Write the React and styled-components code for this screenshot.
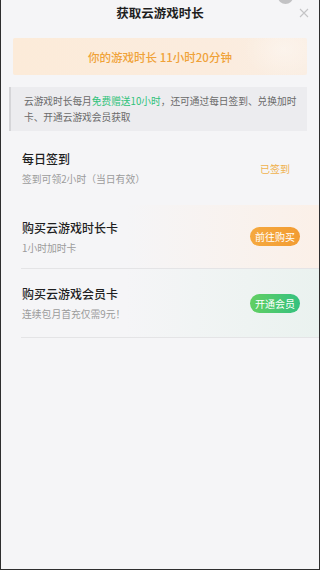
import React from 'react'
import styled, { createGlobalStyle } from 'styled-components'

const GlobalStyle = createGlobalStyle`
  html, body {
    margin: 0;
    padding: 0;
    background: #f5f5f7;
  }
  * { box-sizing: border-box; }
`

const Frame = styled.div`
  position: relative;
  width: 320px;
  height: 570px;
  background: #f5f5f7;
  border-left: 1px solid #2e2e2e;
  border-right: 1px solid #2e2e2e;
  border-bottom: 1px solid #2e2e2e;
  font-family: "Noto Sans CJK SC", "Noto Sans", sans-serif;
  overflow: hidden;
`

const Header = styled.div`
  height: 26px;
  line-height: 26px;
  text-align: center;
  font-size: 12.5px;
  font-weight: 700;
  color: #1e1e1e;
`

const Notch = styled.div`
  position: absolute;
  top: -10px;
  left: 277px;
  width: 15px;
  height: 14px;
  border-radius: 50%;
  background: #c2c2c4;
`

const Close = styled.svg`
  position: absolute;
  top: 8px;
  left: 298px;
  width: 10px;
  height: 10px;
`

const Banner = styled.div`
  margin: 12px 12px 0 12px;
  height: 37px;
  border-radius: 2px;
  display: flex;
  align-items: center;
  justify-content: center;
  background:
    radial-gradient(ellipse 40px 30px at 92% 30%, rgba(255, 255, 255, 0.35), transparent),
    linear-gradient(90deg, #fcebd9 0%, #fbecde 70%, #faeee3 100%);
  color: #f0a238;
  font-size: 11.5px;
  font-weight: 500;
`

const Notice = styled.div`
  margin: 12px 12px 0 8px;
  padding: 6px 4px 6px 13px;
  border-left: 2px solid #d5d5d8;
  background: #ececef;
  color: #6a6a6a;
  font-size: 9.7px;
  line-height: 16px;
`

const Green = styled.span`
  color: #2fc27a;
`

const Row = styled.div`
  height: ${p => p.$h}px;
  margin-left: 20px;
  padding: 0 19px 0 1px;
  display: flex;
  align-items: center;
  justify-content: space-between;
  border-bottom: ${p => (p.$divider ? '1px solid #e4e4e6' : 'none')};
  background: ${p => p.$tint
    ? `linear-gradient(90deg, rgba(245,245,247,0) 35%, ${p.$tint} 100%)`
    : 'transparent'};
`

const Info = styled.div`
  display: flex;
  flex-direction: column;
`

const Title = styled.div`
  font-size: 12px;
  line-height: 18px;
  font-weight: 500;
  color: #1f1f1f;
`

const Sub = styled.div`
  margin-top: 4px;
  font-size: 9.8px;
  line-height: 14px;
  color: #9b9b9b;
`

const Done = styled.div`
  width: 50px;
  text-align: center;
  font-size: 10px;
  color: #f0b24e;
`

const Pill = styled.button`
  width: 50px;
  height: 19px;
  padding: 0;
  border: none;
  border-radius: 10px;
  font-family: inherit;
  font-size: 10px;
  color: #ffffff;
  background: ${p => p.$bg};
`

const rows = [
  { title: '每日签到', sub: '签到可领2小时（当日有效）', h: 74, done: '已签到' },
  {
    title: '购买云游戏时长卡',
    sub: '1小时加时卡',
    h: 64,
    divider: true,
    tint: '#fbf0e8',
    btn: '前往购买',
    bg: 'linear-gradient(90deg, #f5a93f, #f29c33)',
  },
  {
    title: '购买云游戏会员卡',
    sub: '连续包月首充仅需9元！',
    h: 69,
    divider: true,
    tint: '#eaf2ef',
    btn: '开通会员',
    bg: 'linear-gradient(90deg, #62cf62, #35c17f)',
  },
]

export default function App() {
  return (
    <Frame>
      <GlobalStyle />
      <Notch />
      <Header>获取云游戏时长</Header>
      <Close viewBox="0 0 10 10">
        <path d="M1 1 L9 9 M9 1 L1 9" stroke="#c4c4c6" strokeWidth="1.1" fill="none" />
      </Close>
      <Banner>你的游戏时长 11小时20分钟</Banner>
      <Notice>
        云游戏时长每月<Green>免费赠送10小时</Green>，还可通过每日签到、兑换加时卡、开通云游戏会员获取
      </Notice>
      {rows.map(r => (
        <Row key={r.title} $h={r.h} $divider={r.divider} $tint={r.tint}>
          <Info>
            <Title>{r.title}</Title>
            <Sub>{r.sub}</Sub>
          </Info>
          {r.done ? <Done>{r.done}</Done> : <Pill $bg={r.bg}>{r.btn}</Pill>}
        </Row>
      ))}
    </Frame>
  )
}
